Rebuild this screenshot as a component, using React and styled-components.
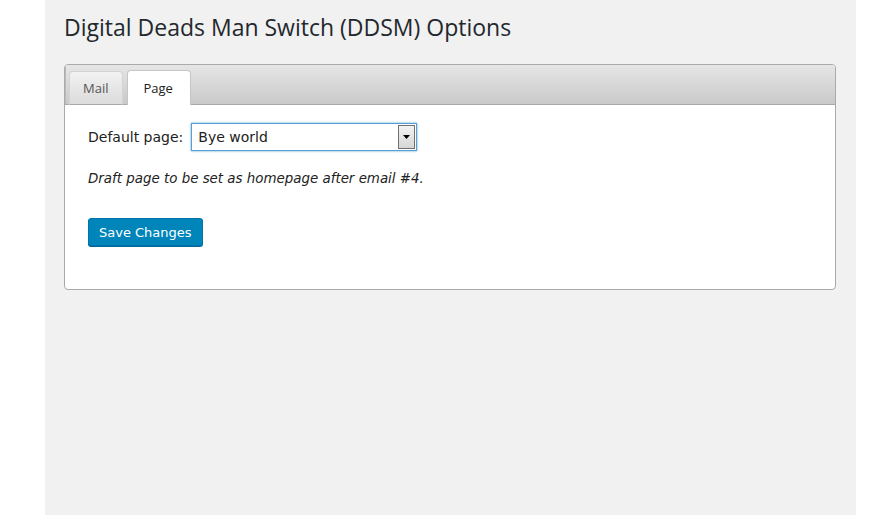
import React from "react";
import styled, { createGlobalStyle } from "styled-components";

const Global = createGlobalStyle`
  html, body { margin: 0; padding: 0; background: #fff; height: 100%; }
  #root { height: 100%; }
  body { font-family: "Open Sans", "Noto Sans", sans-serif; color: #333; }
`;

const bodyFont = `"DejaVu Sans", Verdana, sans-serif`;

const Page = styled.div`
  display: flex;
  height: 515px;
`;

const Gutter = styled.div`
  width: ${(p) => p.$w}px;
  flex: none;
  background: #fff;
`;

const Main = styled.div`
  flex: 1;
  background: #f1f1f1;
  padding: 9px 20px 0 19px;
`;

const Title = styled.h1`
  margin: 0 0 19px;
  font-size: 23px;
  font-weight: 400;
  color: #23282d;
  line-height: 36px;
`;

const Panel = styled.div`
  border: 1px solid #aaa;
  border-radius: 4px;
  background: #fff;
  overflow: hidden;
`;

const TabBar = styled.div`
  display: flex;
  align-items: flex-end;
  gap: 4px;
  height: 39px;
  padding: 0 0 0 4px;
  background: linear-gradient(#e6e6e6, #c9c9c9);
  border-bottom: 1px solid #aaa;
  box-shadow: inset 1px 0 0 #bbb;
`;

const Tab = styled.div`
  height: ${(p) => (p.$active ? 35 : 34)}px;
  margin-bottom: -1px;
  padding: 0 ${(p) => p.$pr}px 0 ${(p) => p.$pl}px;
  display: flex;
  align-items: center;
  font-size: 13px;
  color: ${(p) => (p.$active ? "#222" : "#555")};
  background: ${(p) =>
    p.$active ? "#fff" : "linear-gradient(#f2f2f2, #e4e4e4 60%, #dcdcdc)"};
  border: 1px solid ${(p) => (p.$active ? "#c5c5c5" : "#d3d3d3")};
  border-bottom: ${(p) => (p.$active ? "none" : "1px solid #aaa")};
  border-radius: 4px 4px 0 0;
  box-sizing: border-box;
`;

const Body = styled.div`
  padding: 18px 23px 43px;
`;

const Row = styled.div`
  display: flex;
  align-items: center;
  gap: 8px;
`;

const Label = styled.label`
  font-family: ${bodyFont};
  font-size: 14px;
  color: #222;
`;

const Select = styled.div`
  width: 226px;
  height: 28px;
  box-sizing: border-box;
  border: 1px solid #5b9dd9;
  box-shadow: 0 0 2px rgba(30, 140, 190, 0.8);
  background: #fff;
  display: flex;
  align-items: stretch;
  padding: 1px;
`;

const SelectValue = styled.div`
  flex: 1;
  padding-left: 5px;
  display: flex;
  align-items: center;
  font-family: ${bodyFont};
  font-size: 14px;
  color: #222;
`;

const Arrow = styled.div`
  width: 15px;
  border: 1px solid #707070;
  background: linear-gradient(#f2f2f2, #d6d6d6);
  display: flex;
  align-items: center;
  justify-content: center;
`;

const Hint = styled.p`
  margin: 20px 0 0;
  font-family: ${bodyFont};
  font-size: 13.4px;
  font-style: italic;
  color: #222;
`;

const Button = styled.button`
  margin-top: 32px;
  height: 28px;
  padding: 0 10px;
  font-family: ${bodyFont};
  font-size: 13px;
  color: #fff;
  background: #0085ba;
  border: 1px solid #0073aa;
  border-radius: 3px;
  box-shadow: 0 1px 0 #006799;
`;

export default function App() {
  return (
    <>
      <Global />
      <Page>
        <Gutter $w={45} />
        <Main>
          <Title>Digital Deads Man Switch (DDSM) Options</Title>
          <Panel>
            <TabBar>
              <Tab $pl={13} $pr={14}>Mail</Tab>
              <Tab $active $pl={15} $pr={17}>Page</Tab>
            </TabBar>
            <Body>
              <Row>
                <Label>Default page:</Label>
                <Select>
                  <SelectValue>Bye world</SelectValue>
                  <Arrow>
                    <svg width="7" height="4" viewBox="0 0 7 4">
                      <path d="M0 0h7L3.5 4z" fill="#000" />
                    </svg>
                  </Arrow>
                </Select>
              </Row>
              <Hint>Draft page to be set as homepage after email #4.</Hint>
              <Button>Save Changes</Button>
            </Body>
          </Panel>
        </Main>
        <Gutter $w={23} />
      </Page>
    </>
  );
}
